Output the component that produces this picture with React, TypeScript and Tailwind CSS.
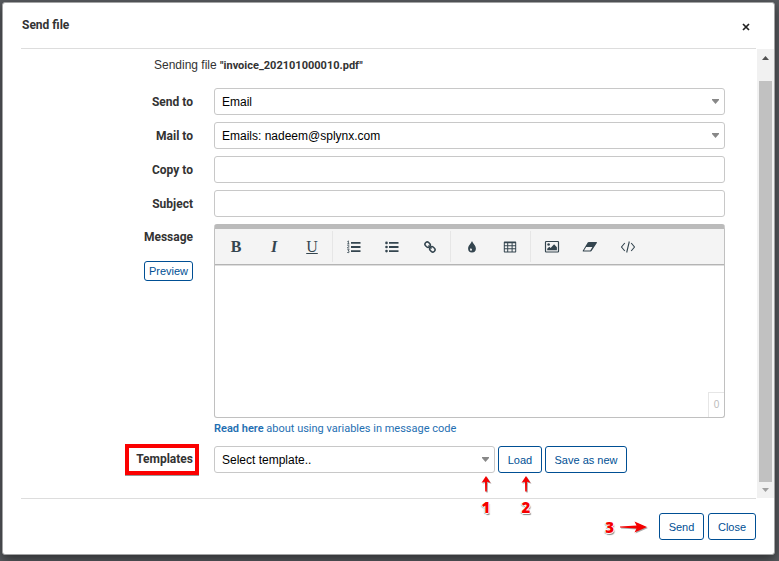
import type { ReactNode } from "react";

const field = "block h-[27px] w-full rounded-[3px] border border-[#c8c8c8] bg-white px-[7px] text-[12px] text-black";
const outlineButton =
  "shrink-0 rounded-[3px] border border-[#004f94] bg-white text-[11px] text-[#004f94]";
const labelText = "font-['Roboto','Liberation_Sans',sans-serif] font-bold text-[#333]";

function Row({ id, label, children }: { id: string; label: string; children: ReactNode }) {
  return (
    <div className="flex items-center gap-[21px]">
      <label htmlFor={id} className={`w-[190px] shrink-0 text-right ${labelText}`}>
        {label}
      </label>
      <div className="flex-1">{children}</div>
    </div>
  );
}

function Picker({ id, option }: { id: string; option: string }) {
  return (
    <div className="relative">
      <select id={id} className={`appearance-none ${field}`}>
        <option>{option}</option>
      </select>
      <svg className="pointer-events-none absolute top-[11px] right-[6px] h-[5px] w-[7px]" viewBox="0 0 7 5" fill="#888">
        <path d="M0 0h7v1L3.500 5 0 1z" />
      </svg>
    </div>
  );
}

function Group({ last, children }: { last?: boolean; children: ReactNode }) {
  return (
    <div className={`flex h-[31px] border-r pr-px pl-[2px] ${last ? "border-transparent" : "border-[#e6e6e6]"}`}>
      {children}
    </div>
  );
}

function Tool({ name, children }: { name: string; children: ReactNode }) {
  return (
    <button type="button" aria-label={name} className="flex h-[31px] w-[38px] items-center justify-center text-[#34454f]">
      {children}
    </button>
  );
}

function Icon({ children }: { children: ReactNode }) {
  return (
    <svg className="h-[14px] w-[16px]" viewBox="0 0 16 14" fill="currentColor">
      {children}
    </svg>
  );
}

function Toolbar() {
  return (
    <div className="flex h-[36px] items-center border-b border-[#b4b4b4] bg-[#f4f4f4] font-['Liberation_Serif',serif] text-[16px] shadow-[0_1px_0_#dedede]">
      <Group>
        <Tool name="Bold"><b>B</b></Tool>
        <Tool name="Italic"><b><i>I</i></b></Tool>
        <Tool name="Underline"><u>U</u></Tool>
      </Group>
      <Group>
        <Tool name="Numbered list">
          <Icon>
            <path d="M5 2h9.500v1.800H5zM5 6.100h9.500v1.800H5zM5 10.200h9.500V12H5z" />
            <path d="M1.400 1.600l1-.7v3M1.200 3.900h2.200M1.300 5.700c.6-.7 2-.5 1.800.4L1.300 8h2M1.300 9.700h1.900l-1 1.200c1.400 0 1.400 2-.2 1.800l-.8-.3" fill="none" stroke="currentColor" strokeWidth=".8" />
          </Icon>
        </Tool>
        <Tool name="Bulleted list">
          <Icon>
            <path d="M5 2h9.500v1.800H5zM5 6.100h9.500v1.800H5zM5 10.200h9.500V12H5z" />
            <circle cx="2.500" cy="2.900" r="1.300" /><circle cx="2.500" cy="7" r="1.300" /><circle cx="2.500" cy="11.100" r="1.300" />
          </Icon>
        </Tool>
        <Tool name="Link">
          <Icon>
            <g transform="rotate(45 8 7)" fill="none" stroke="currentColor" strokeWidth="1.500">
              <rect x="1.900" y="4.800" width="5.500" height="4.400" rx="2" />
              <rect x="8.600" y="4.800" width="5.500" height="4.400" rx="2" />
              <path d="M5.800 7h4.400" strokeWidth="1.300" />
            </g>
          </Icon>
        </Tool>
      </Group>
      <Group>
        <Tool name="Text colour">
          <Icon>
            <path fillRule="evenodd" d="M8 .8c.5 2.500 3.900 4.600 3.900 7.800a3.900 3.900 0 0 1-7.800 0C4.100 5.400 7.500 3.300 8 .8zM6.900 8c-.5.7-.9 1.200-.9 1.800a1 1 0 0 0 2 0c0-.6-.7-1.100-1.100-1.800z" />
          </Icon>
        </Tool>
        <Tool name="Table">
          <Icon>
            <path fillRule="evenodd" d="M2.500 1.500h11a.7.7 0 0 1 .7.7v9.600a.7.7 0 0 1-.7.7h-11a.7.7 0 0 1-.7-.7V2.200a.7.7 0 0 1 .7-.7zM2.800 3.300v1.900h2.400V3.300zM6.200 3.300v1.900h3.400V3.300zM10.600 3.300v1.900h2.600V3.300zM2.800 6.200v2h2.400v-2zM6.200 6.200v2h3.400v-2zM10.600 6.200v2h2.600v-2zM2.800 9.200v2.200h2.400V9.200zM6.200 9.200v2.200h3.400V9.200zM10.600 9.200v2.200h2.600V9.200z" />
          </Icon>
        </Tool>
      </Group>
      <Group last>
        <Tool name="Image">
          <Icon>
            <rect x="1.500" y="1.500" width="13" height="10.500" rx=".7" fill="none" stroke="currentColor" strokeWidth="1.200" />
            <circle cx="4.600" cy="4.500" r="1.300" />
            <path d="M3.200 10.300V8.700l2.100-2 1.300 1.200 3.500-3.600 2.800 2.900v3.100z" />
          </Icon>
        </Tool>
        <Tool name="Clear formatting">
          <Icon>
            <path fillRule="evenodd" d="M6.700 2h7.600c.6 0 .8.400.5.900L9.700 10.800q-.4.600-1.100.600H1.400c-.7 0-.9-.5-.5-1L5.700 2.600q.4-.6 1-.6zM4.200 7 2 10.400h6.200L10.400 7z" />
          </Icon>
        </Tool>
        <Tool name="Code">
          <Icon>
            <path d="M4.800 3 1.500 7l3.300 4M11.200 3l3.300 4-3.300 4M9.300 1.500l-2.600 11" fill="none" stroke="currentColor" strokeWidth="1.100" />
          </Icon>
        </Tool>
      </Group>
    </div>
  );
}

function UpArrow() {
  return (
    <svg className="h-4 w-[10px] drop-shadow-[1px_1px_0_#aaa]" viewBox="0 0 10 16" fill="#f50000">
      <path d="M5 0l4.500 6.800L6 5.800 5.800 15.500H4.200L4 5.800l-3.500 1z" />
    </svg>
  );
}

const digit =
  "font-['Open_Sans',sans-serif] text-[15px] leading-4 font-extrabold text-[#f50000] [text-shadow:-1px_0_#fff,1px_0_#fff,0_-1px_#fff,0_1px_#fff,-1px_1px_1px_#999,1px_2px_1px_#888]";

function Step({ n }: { n: string }) {
  return (
    <div className="pointer-events-none absolute top-[30px] right-0 z-10 flex w-[18px] flex-col items-center gap-[7px]">
      <UpArrow />
      <span className={digit}>{n}</span>
    </div>
  );
}

function Scrollbar() {
  return (
    <div aria-hidden="true" className="flex w-[17px] shrink-0 flex-col items-center bg-[#f1f1f1]">
      <svg className="h-8 w-[17px] shrink-0" viewBox="0 0 17 32" fill="#505050"><path d="M5 11h7L8.500 7z" /></svg>
      <div className="w-[13px] flex-1 bg-[#c1c1c1]" />
      <svg className="h-4 w-[17px] shrink-0" viewBox="0 0 17 16" fill="#a0a0a0"><path d="M5 6h7l-3.500 4z" /></svg>
    </div>
  );
}

export default function App() {
  return (
    <div className="min-h-screen bg-[#585b5f] pt-[2px] pr-1 pb-[5px] pl-[2px] font-['Liberation_Sans',sans-serif] text-[12px] leading-4 text-[#333]">
      <div role="dialog" aria-label="Send file" className="rounded-[3px] border border-[#a3a4a5] bg-white shadow-[0_4px_12px_rgba(0,0,0,0.5)]">
        <header className="mr-[18px] ml-[18px] flex h-[46px] items-center justify-between border-b border-[#ddd] pr-[5px] pl-px">
          <h1 className={`pb-px ${labelText}`}>Send file</h1>
          <button type="button" aria-label="Close dialog" className="flex size-[10px] items-center justify-center pt-[2px]">
            <svg className="size-2 shrink-0" viewBox="0 0 8 8" fill="none" stroke="#222" strokeWidth="1.700"><path d="M1 1l6 6M7 1L1 7" /></svg>
          </button>
        </header>

        <div className="flex">
          <form id="send-form" className="flex flex-1 flex-col gap-[7px] pt-2 pr-[32px] pb-[23px]" onSubmit={(e) => e.preventDefault()}>
            <p className="mb-[7px] pl-[151px]">
              Sending file <b className="font-['Roboto',sans-serif] text-[11px]">"invoice_202101000010.pdf"</b>
            </p>
            <Row id="send-to" label="Send to"><Picker id="send-to" option="Email" /></Row>
            <Row id="mail-to" label="Mail to"><Picker id="mail-to" option="Emails: nadeem@splynx.com" /></Row>
            <Row id="copy-to" label="Copy to"><input id="copy-to" type="text" className={field} /></Row>
            <Row id="subject" label="Subject"><input id="subject" type="text" className={field} /></Row>

            <div className="flex gap-[21px]">
              <div className="flex w-[190px] shrink-0 flex-col items-end gap-[10px]">
                <label htmlFor="message" className={`leading-[27px] ${labelText}`}>Message</label>
                <button type="button" className={`h-5 px-1 ${outlineButton}`}>Preview</button>
              </div>
              <div className="flex-1">
                <div className="relative overflow-hidden rounded-[3px] border border-t-[5px] border-[#c0c0c0] border-t-[#bbb]">
                  <Toolbar />
                  <textarea id="message" className="block h-[152px] w-full resize-none p-2 outline-none" />
                  <span className="absolute right-0 bottom-0 flex h-[25px] w-4 items-center justify-center border-t border-l border-[#e6e6e6] text-[10px] text-[#bbb]">0</span>
                </div>
                <a href="#variables" className="mt-[3px] block font-['Roboto','Liberation_Sans',sans-serif] text-[11px] text-[#1f6fb2]">
                  <b className="font-semibold">Read here</b> about using variables in message code
                </a>
              </div>
            </div>

            <div className="flex items-center gap-[15px]">
              <div className="flex w-[196px] shrink-0 justify-end">
                <label htmlFor="template" className={`border-4 border-[#fb0000] pr-[2px] pl-[7px] leading-[23px] shadow-[0_1px_0_#999] ${labelText}`}>
                  Templates
                </label>
              </div>
              <div className="flex items-center gap-[3px]">
                <div className="relative w-[281px]">
                  <Picker id="template" option="Select template.." />
                  <Step n="1" />
                </div>
                <div className="relative">
                  <button type="button" className={`h-[27px] w-11 ${outlineButton}`}>Load</button>
                  <div className="absolute top-0 right-[7px]"><Step n="2" /></div>
                </div>
                <button type="button" className={`h-[27px] w-[82px] ${outlineButton}`}>Save as new</button>
              </div>
            </div>
          </form>
          <Scrollbar />
        </div>

        <footer className="mr-[18px] ml-[18px] flex items-center justify-end gap-1 border-t border-[#ddd] pt-[14px] pb-[14px]">
          <div className="mr-2 flex items-center gap-[6px]">
            <span className={digit}>3</span>
            <svg className="h-3 w-[27px] drop-shadow-[1px_1px_0_#aaa]" viewBox="0 0 27 12" fill="#f50000">
              <path d="M27 6L14.500.5l2 4L0 5.500v1l16.500 1-2 4z" />
            </svg>
          </div>
          <button type="submit" form="send-form" className={`h-[27px] w-[45px] ${outlineButton}`}>Send</button>
          <button type="button" className={`h-[27px] w-12 ${outlineButton}`}>Close</button>
        </footer>
      </div>
    </div>
  );
}
